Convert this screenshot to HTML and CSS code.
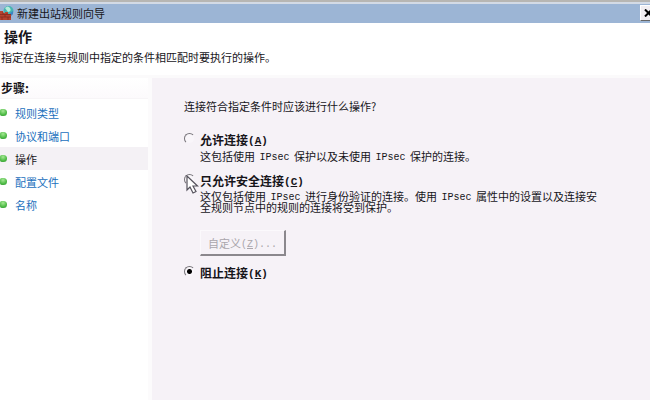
FILE: index.html
```
<!DOCTYPE html>
<html lang="zh-CN">
<head>
    <meta charset="UTF-8">
    <meta name="viewport" content="width=device-width, initial-scale=1.0">
    <title>新建出站规则向导</title>
    <link rel="stylesheet" href="styles.css">
</head>
<body>

    <!-- Title Bar -->
    <div class="title-bar">
        <svg class="app-icon" width="14" height="16" viewBox="0 0 14 16">
            <circle cx="8.500" cy="6" r="5" fill="#45b5b0"></circle>
            <path d="M5 3q3-3 5 0t-2 4z" fill="#b5ecd9"></path>
            <path d="M10 8l3-2v3l-2 2z" fill="#3a84c4"></path>
            <path d="M0 6h3v2h2v-1h3v2h3v6H0z" fill="#b5432f"></path>
            <path d="M0 9.500h11M0 12h11M3 7v2.500M7 8v1.500M5 9.500V12M2 12v3M8 12v3" stroke="#7c2a1e" stroke-width="0.700" fill="none"></path>
        </svg>
        <span class="title-text">新建出站规则向导</span>
        <button class="close-button" type="button" aria-label="关闭">
            <svg width="9" height="8" viewBox="0 0 9 8"><path d="M1 0.500l7 7M8 0.500l-7 7" stroke="#000" stroke-width="2"></path></svg>
        </button>
    </div>

    <!-- Page Heading -->
    <header class="heading">
        <h1>操作</h1>
        <p>指定在连接与规则中指定的条件相匹配时要执行的操作。</p>
    </header>

    <div class="wizard">
        <!-- Steps -->
        <nav class="steps">
            <h2>步骤:</h2>
            <ul>
                <li><a href="#">规则类型</a></li>
                <li><a href="#">协议和端口</a></li>
                <li class="current"><a href="#" aria-current="step">操作</a></li>
                <li><a href="#">配置文件</a></li>
                <li><a href="#">名称</a></li>
            </ul>
        </nav>

        <!-- Action Choices -->
        <main class="content">
            <p class="question">连接符合指定条件时应该进行什么操作?</p>

            <div class="option">
                <input type="radio" name="action" id="allow">
                <div class="option-body">
                    <label for="allow">允许连接<span class="key">(<u>A</u>)</span></label>
                    <p>这包括使用 <span class="latin">IPsec</span> 保护以及未使用 <span class="latin">IPsec</span> 保护的连接。</p>
                </div>
            </div>

            <div class="option secure">
                <input type="radio" name="action" id="secure">
                <svg class="pointer" width="13" height="19" viewBox="0 0 13 19">
                    <path d="M1 1v14l3-3 3 6 3-1.500-3-5.500h4.500z" fill="#fff" stroke="#55525c" stroke-width="1.200"></path>
                </svg>
                <div class="option-body">
                    <label for="secure">只允许安全连接<span class="key">(<u>C</u>)</span></label>
                    <p>这仅包括使用 <span class="latin">IPsec</span> 进行身份验证的连接。使用 <span class="latin">IPsec</span> 属性中的设置以及连接安全规则节点中的规则的连接将受到保护。</p>
                    <button class="customize" type="button" disabled>自定义<span class="latin-tail">(<u>Z</u>)...</span></button>
                </div>
            </div>

            <div class="option">
                <input type="radio" name="action" id="block" checked>
                <div class="option-body">
                    <label for="block">阻止连接<span class="key">(<u>K</u>)</span></label>
                </div>
            </div>
        </main>
    </div>

</body>
</html>
```
FILE: styles.css
```
/* General Styles */
* {
    box-sizing: border-box;
}

body {
    margin: 0;
    min-height: 100vh;
    display: flex;
    flex-direction: column;
    overflow: hidden;
    background: #fff;
    color: #17151a;
    font-family: "Noto Sans CJK SC", sans-serif;
    font-size: 11px;
    line-height: 16px;
}

h1, h2, p, ul {
    margin: 0;
    padding: 0;
}

/* Half-width text */
.latin, .latin-tail, .key {
    font-family: "Liberation Mono", monospace;
    font-size: 10px;
    line-height: 0;
    vertical-align: 1px;
}

.latin {
    margin: 0 2px;
}

.key {
    font-size: 11px;
}

/* Title Bar */
.title-bar {
    display: flex;
    align-items: center;
    height: 23px;
    border-top: 2px solid #b7b6b3;
    box-shadow: inset 0 2px #d3dae5;
    background: #9cb5d5;
}

.app-icon {
    flex-shrink: 0;
    margin-right: 3px;
}

.title-text {
    flex: 1;
}

.close-button {
    display: flex;
    align-items: center;
    justify-content: center;
    width: 16px;
    height: 16px;
    margin-right: -6px;
    padding: 0;
    border: 1px solid;
    border-color: #fff #555 #666 #fff;
    background: #f1eef2;
}

/* Page Heading */
.heading {
    height: 55px;
    padding: 3px 1px;
    border-bottom: 3px solid #fbfafb;
}

.heading h1 {
    padding-left: 3px;
    font-size: 14px;
    line-height: 20px;
}

.heading p {
    margin-top: 3px;
}

.wizard {
    flex: 1;
    display: flex;
}

/* Steps */
.steps {
    width: 152px;
    flex-shrink: 0;
    border-right: 4px solid #fcfbfc;
}

.steps h2 {
    padding-left: 1px;
    font-size: 12px;
    line-height: 20px;
    border-bottom: 1px solid #f7f5f7;
    margin-bottom: 2px;
    background: linear-gradient(#fff, #fcfafc);
}

.steps ul {
    list-style: none;
}

.steps li {
    display: flex;
    align-items: center;
    gap: 8px;
    height: 23px;
}

.steps li::before {
    content: "";
    width: 7px;
    height: 7px;
    border-radius: 2px 4px 4px 2px;
    background: radial-gradient(circle at 3px 2px, #a5e894, #4cb944 60%, #2f8f32);
}

.steps a {
    color: #1b70bd;
    text-decoration: none;
}

.steps .current {
    background: #f4f1f5;
}

.steps .current a {
    color: #17151a;
}

/* Action Choices */
.content {
    flex: 1;
    padding: 20px 44px 20px 32px;
    background: #f6f2f7;
}

.question {
    margin-bottom: 18px;
}

.option {
    display: flex;
    position: relative;
    gap: 5px;
    margin-bottom: 9px;
}

.option input {
    appearance: none;
    flex-shrink: 0;
    width: 11px;
    height: 11px;
    margin: 1px 0 0;
    border: 1px solid;
    border-color: #77747a #f6f2f7 #f6f2f7 #77747a;
    border-radius: 50%;
    background: #f9f6fa;
}

.option input:checked {
    background: radial-gradient(circle, #000 2px, #f9f6fa 3px);
}

.option label {
    display: block;
    font-size: 12px;
    font-weight: bold;
    line-height: 16px;
}

.option-body p {
    line-height: 16px;
}

.secure .option-body p {
    padding-top: 2px;
    line-height: 11px;
}

/* Mouse pointer resting on the second choice */
.pointer {
    position: absolute;
    left: 2px;
    top: 2px;
}

.customize {
    display: block;
    width: 86px;
    height: 26px;
    margin: 17px 0 0;
    padding: 0;
    border: 1px solid;
    border-width: 1px 2px 2px 1px;
    border-color: #fbf9fc #8b888d #8b888d #fbf9fc;
    background: #f6f2f7;
    color: #aaa6ac;
    font-family: inherit;
    font-size: 11px;
}
```
